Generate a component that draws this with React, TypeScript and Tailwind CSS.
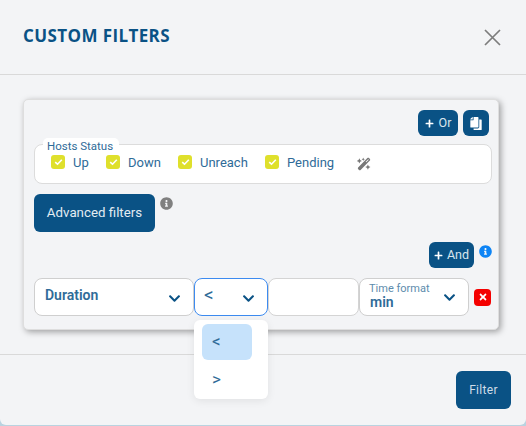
import { FaPlus, FaCopy, FaInfoCircle, FaChevronDown, FaTimes } from "react-icons/fa";
import { FaWandMagicSparkles } from "react-icons/fa6";

const Check = ({ label, w }: { label: string; w: string }) => (
  <div className={`flex items-center gap-[8px] ${w}`}>
    <span className="w-[14px] h-[14px] rounded-[3px] bg-[#dfe02c] flex items-center justify-center">
      <svg width="9" height="8" viewBox="0 0 9 8" fill="none"><path d="M1.2 4.2 3.5 6.2 7.8 1.8" stroke="#fff" strokeWidth="1.6" /></svg>
    </span>
    <span className="text-[13px] text-[#2f6b98] leading-none">{label}</span>
  </div>
);

const Chevron = () => <FaChevronDown className="text-[#0a5285] w-[13px] h-[13px]" />;

export default function App() {
  return (
    <div className="w-[526px] h-[426px] overflow-hidden bg-[#b9d3e0] font-['Roboto',sans-serif] relative">
      <div className="w-[526px] h-[425px] bg-[#f3f4f6] rounded-b-[6px] flex flex-col">
        <header className="h-[75px] shrink-0 border-b border-[#d9d9d9] flex items-center justify-between pl-[23px] pr-[25px]">
          <h1 className="font-['Open_Sans',sans-serif] font-bold text-[17px] tracking-[0.4px] text-[#0a5285] -mt-[2px]">CUSTOM FILTERS</h1>
          <svg width="17" height="17" viewBox="0 0 17 17"><path d="M1 1 16 16M16 1 1 16" stroke="#7d7d7d" strokeWidth="1.7" /></svg>
        </header>
        <main className="h-[280px] shrink-0 border-b border-[#d9d9d9] px-[23px] pt-[24px]">
          <div className="w-[476px] h-[231px] bg-[#f3f4f6] rounded-[5px] shadow-[2px_2px_6px_rgba(0,0,0,0.35)] border border-[#dedede] pl-[10px] pr-[6px] pt-[10px] flex flex-col">
            <div className="flex justify-end gap-[5px] pr-[3px]">
              <button className="w-[40px] h-[26px] rounded-[6px] bg-[#0a5285] text-[#d9e6ee] text-[12.5px] flex items-center justify-center gap-[5px]"><FaPlus className="w-[9px] h-[9px] text-white" />Or</button>
              <button className="w-[26px] h-[26px] rounded-[6px] bg-[#0a5285] flex items-center justify-center"><FaCopy className="w-[12px] h-[13px] text-white -scale-x-100" /></button>
            </div>
            <div className="relative mt-[8px] h-[40px] rounded-[8px] bg-white border border-[#dcdcdc] flex items-center pl-[16px] pb-[4px]">
              <span className="absolute left-[8px] -top-[7px] w-[76px] h-[14px] pl-[4px] bg-white rounded-[5px] text-[11.5px] leading-[17px] text-[#2f6b98]">Hosts Status</span>
              <Check label="Up" w="w-[55px]" />
              <Check label="Down" w="w-[72px]" />
              <Check label="Unreach" w="w-[87px]" />
              <Check label="Pending" w="w-[92px]" />
              <FaWandMagicSparkles className="w-[14px] h-[14px] text-[#777777] mt-[3px]" />
            </div>
            <div className="flex mt-[10px] items-start gap-[5px]">
              <button className="w-[121px] h-[38px] rounded-[6px] bg-[#0a5285] text-[#e3edf3] text-[13.3px]">Advanced filters</button>
              <FaInfoCircle className="w-[13px] h-[13px] mt-[3px] text-[#808080]" />
            </div>
            <div className="flex justify-end mt-[10px] gap-[5px]">
              <button className="w-[45px] h-[26px] rounded-[6px] bg-[#0a5285] text-[#d9e6ee] text-[12.5px] flex items-center justify-center gap-[4px]"><FaPlus className="w-[9px] h-[9px] text-white" />And</button>
              <FaInfoCircle className="w-[13px] h-[13px] mt-[3px] text-[#0d84f5]" />
            </div>
            <div className="flex mt-[10px] h-[38px] items-stretch">
              <div className="w-[160px] rounded-[8px] bg-white border border-[#cfcfcf] flex items-center justify-between pl-[10px] pr-[12px]">
                <span className="text-[14px] font-semibold text-[#2f6b98] -mt-[4px]">Duration</span>
                <span className="mt-[3px]"><Chevron /></span>
              </div>
              <div className="relative w-[74px] rounded-[8px] bg-white border border-[#3d8bf0] flex items-center justify-between pl-[9px] pr-[12px]">
                <span className="text-[19px] leading-[22px] text-[#2f6b98] -mt-[5px]">&lt;</span>
                <span className="mt-[3px]"><Chevron /></span>
                <div className="absolute -left-[1px] top-[41px] w-[74px] h-[79px] bg-white rounded-[6px] shadow-[0_2px_8px_rgba(0,0,0,0.08)] px-[8px] py-[4px] z-10">
                  <div className="w-[50px] h-[36px] rounded-[6px] bg-[#c6e2fb] flex items-center pl-[10px] text-[17px] text-[#2f6b98]">&lt;</div>
                  <div className="w-[50px] h-[36px] mt-[2px] flex items-center pl-[10px] text-[17px] text-[#2f6b98]">&gt;</div>
                </div>
              </div>
              <div className="w-[91px] rounded-[8px] bg-white border border-[#d4d4d4]" />
              <div className="w-[110px] rounded-[8px] bg-white border border-[#cfcfcf] flex items-center justify-between pl-[9px] pr-[12px]">
                <div className="flex flex-col -mt-[3px]">
                  <span className="text-[11px] leading-[12px] text-[#5d8cad]">Time format</span>
                  <span className="text-[14px] leading-[14px] font-semibold text-[#2f6b98] pl-[1px]">min</span>
                </div>
                <span className="mt-[1px]"><Chevron /></span>
              </div>
              <div className="ml-[5px] self-center w-[17px] h-[17px] rounded-[4px] bg-[#f40000] flex items-center justify-center"><FaTimes className="w-[10px] h-[10px] text-white" /></div>
            </div>
          </div>
        </main>
        <footer className="flex-1 flex items-start justify-end pr-[15px] pt-[16px]">
          <button className="w-[55px] h-[38px] rounded-[6px] bg-[#0a5285] text-[#cfdde8] text-[12px] tracking-[0.3px]">Filter</button>
        </footer>
      </div>
    </div>
  );
}
